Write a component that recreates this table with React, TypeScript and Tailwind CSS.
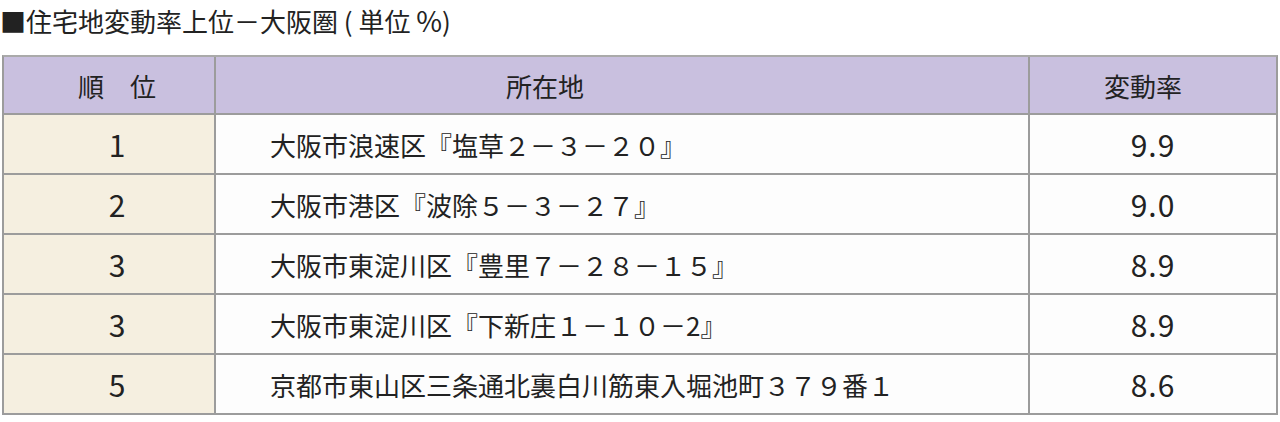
import React from "react";

const rows = [
  { rank: "1", addr: "大阪市浪速区『塩草２－３－２０』", rate: "9.9" },
  { rank: "2", addr: "大阪市港区『波除５－３－２７』", rate: "9.0" },
  { rank: "3", addr: "大阪市東淀川区『豊里７－２８－１５』", rate: "8.9" },
  { rank: "3", addr: "大阪市東淀川区『下新庄１－１０－2』", rate: "8.9" },
  { rank: "5", addr: "京都市東山区三条通北裏白川筋東入堀池町３７９番１", rate: "8.6" },
];

export default function App() {
  return (
    <div
      className="w-[1280px] h-[422px] bg-white text-[#222222] text-[26px]"
      style={{ fontFamily: '"Noto Sans CJK JP", "Noto Sans", sans-serif' }}
    >
      <div className="h-[40px] leading-[40px] whitespace-nowrap">
        ■住宅地変動率上位－大阪圏 ( 単位 <span className="text-[28px]">%</span>)
      </div>
      <div className="mt-[15px] ml-[2px] w-[1276px] border-2 border-[#9c9c9c] border-t-[#aaaaaa]">
        <div className="grid grid-cols-[212px_814px_1fr] h-[58px] bg-[#c9c0df] border-b-2 border-[#9c9c9c]">
          <div className="flex items-center justify-center pl-4 border-r-2 border-[#9c9c9c]">順　位</div>
          <div className="flex items-center justify-center pr-[154px] border-r-2 border-[#9c9c9c]">所在地</div>
          <div className="flex items-center justify-center pr-5">変動率</div>
        </div>
        {rows.map((r, i) => (
          <div
            key={i}
            className={
              i < rows.length - 1
                ? "grid grid-cols-[212px_814px_1fr] h-[60px] border-b-2 border-[#9c9c9c]"
                : "grid grid-cols-[212px_814px_1fr] h-[58px]"
            }
          >
            <div className="flex items-center justify-center pl-4 text-[30px] bg-[#f5efe0] border-r-2 border-[#9c9c9c]">{r.rank}</div>
            <div className="flex items-center pl-[54px] bg-[#fdfdfd] border-r-2 border-[#9c9c9c] whitespace-nowrap">{r.addr}</div>
            <div className="flex items-center justify-center text-[30px] tracking-[1px] bg-[#fdfdfd]">{r.rate}</div>
          </div>
        ))}
      </div>
    </div>
  );
}
